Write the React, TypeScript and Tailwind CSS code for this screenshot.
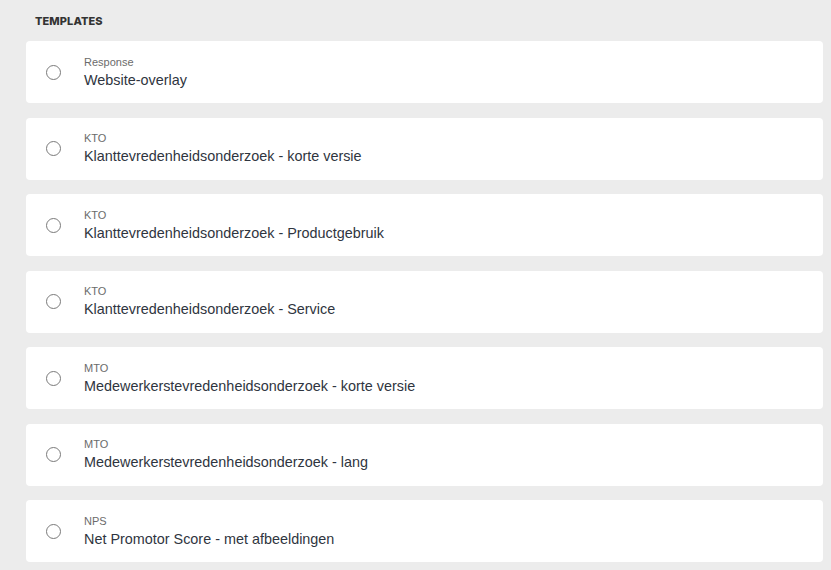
import React from "react";

const items = [
  { cat: "Response", title: "Website-overlay" },
  { cat: "KTO", title: "Klanttevredenheidsonderzoek - korte versie" },
  { cat: "KTO", title: "Klanttevredenheidsonderzoek - Productgebruik" },
  { cat: "KTO", title: "Klanttevredenheidsonderzoek - Service" },
  { cat: "MTO", title: "Medewerkerstevredenheidsonderzoek - korte versie" },
  { cat: "MTO", title: "Medewerkerstevredenheidsonderzoek - lang" },
  { cat: "NPS", title: "Net Promotor Score - met afbeeldingen" },
];

export default function App() {
  return (
    <div className="w-[831px] h-[570px] overflow-hidden bg-[#ececec] pl-[26px] pr-[8px] pt-[13px]" style={{ fontFamily: '"Liberation Sans", Arial, sans-serif' }}>
      <div className="pl-[9px] h-[16px] flex items-center text-[11px] font-bold text-[#333] tracking-[0.1px]" style={{ fontFamily: 'Inter, sans-serif', fontWeight: 800 }}>
        TEMPLATES
      </div>
      <div className="mt-[12px] flex flex-col gap-[14.5px]">
        {items.map((it, i) => (
          <div key={i} className="h-[62px] bg-white rounded-[4px] flex items-center pl-[20px]">
            <div className="w-[15px] h-[15px] rounded-full border-[1.5px] border-[#7a7a7a] shrink-0" />
            <div className="ml-[23px] flex flex-col">
              <span className="text-[11px] leading-[13px] text-[#6b6b6b]">{it.cat}</span>
              <span className="text-[14.4px] leading-[18px] text-[#2f3540] mt-[2px]">{it.title}</span>
            </div>
          </div>
        ))}
      </div>
    </div>
  );
}
